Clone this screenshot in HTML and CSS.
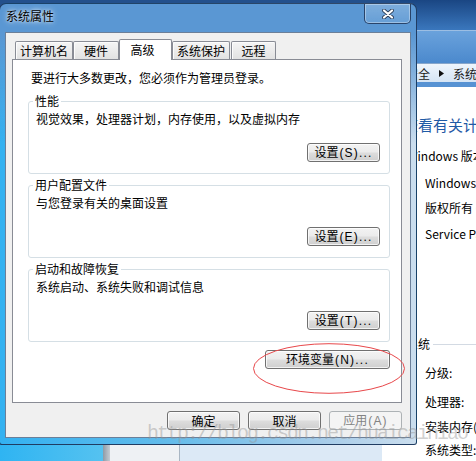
FILE: index.html
```html
<!DOCTYPE html>
<html lang="zh-CN">
<head>
<meta charset="utf-8">
<title>系统属性</title>
<link rel="stylesheet" href="styles.css">
</head>
<body>
<div class="desktop">
  <div class="backwin">
    <div class="bw-glass"></div>
    <div class="bw-edge"></div>
    <div class="bw-pane"></div>
    <div class="bw-blue"></div>
    <div class="bw-white"></div>
  </div>

  <div class="explorer">
    <div class="ex-title"></div>
    <div class="ex-nav"></div>
    <div class="ex-address">
      <span>安全</span>
      <svg class="ex-arrow" width="5" height="7" viewBox="0 0 5 7"><path d="M0 0 L5 3.5 L0 7 Z" fill="#111"/></svg>
      <span>系统</span>
    </div>
    <div class="ex-bar"></div>
    <div class="ex-content">
      <div class="ex-heading">查看有关计算机的基本信息</div>
      <div class="ex-sub">Windows 版本</div>
      <div class="ex-item i1">Windows 7 旗舰版</div>
      <div class="ex-item i2">版权所有 © 2009 Microsoft Corporation</div>
      <div class="ex-item i3">Service Pack 1</div>
      <div class="ex-section"><span>系统</span><span class="ex-rule"></span></div>
      <div class="ex-item i4">分级:</div>
      <div class="ex-item i5">处理器:</div>
      <div class="ex-item i6">安装内存(RAM):</div>
      <div class="ex-item i7">系统类型:</div>
    </div>
  </div>

  <div class="dialog">
    <div class="titlebar">
      <span class="title">系统属性</span>
      <span class="close">
        <svg width="12" height="10" viewBox="0 0 12 10">
          <path d="M2 1.5 L10 8.5 M10 1.5 L2 8.5" stroke="#2b3d57" stroke-width="3.8" stroke-linecap="round"/>
          <path d="M2 1.5 L10 8.5 M10 1.5 L2 8.5" stroke="#ffffff" stroke-width="2.2" stroke-linecap="round"/>
        </svg>
      </span>
    </div>
    <div class="client">
      <div class="tabctl">
        <div class="tabs">
          <div class="tab t1">计算机名</div>
          <div class="tab t2">硬件</div>
          <div class="tab t3 active">高级</div>
          <div class="tab t4">系统保护</div>
          <div class="tab t5">远程</div>
        </div>
        <div class="panel">
          <p class="intro">要进行大多数更改，您必须作为管理员登录。</p>
          <fieldset class="group">
            <legend>性能</legend>
            <div class="group-body">
              <p class="desc">视觉效果，处理器计划，内存使用，以及虚拟内存</p>
              <button class="btn">设置<span class="key">(S)...</span></button>
            </div>
          </fieldset>
          <fieldset class="group">
            <legend>用户配置文件</legend>
            <div class="group-body">
              <p class="desc">与您登录有关的桌面设置</p>
              <button class="btn">设置<span class="key">(E)...</span></button>
            </div>
          </fieldset>
          <fieldset class="group">
            <legend>启动和故障恢复</legend>
            <div class="group-body">
              <p class="desc">系统启动、系统失败和调试信息</p>
              <button class="btn">设置<span class="key">(T)...</span></button>
            </div>
          </fieldset>
          <div class="env-row">
            <button class="btn env">环境变量<span class="key">(N)...</span></button>
          </div>
        </div>
      </div>
      <div class="actions">
        <button class="btn act">确定</button>
        <button class="btn act">取消</button>
        <button class="btn act disabled">应用<span class="key">(A)</span></button>
      </div>
    </div>
  </div>

  <svg class="highlight" width="154" height="53" viewBox="0 0 154 53">
    <ellipse cx="77" cy="26.5" rx="75.5" ry="24.8" fill="none" stroke="#e8474a" stroke-width="1"/>
  </svg>

  <div class="watermark">http://blog.csdn.net/huaicainiao</div>
</div>
</body>
</html>
```

FILE: styles.css
```css
* { box-sizing: border-box; }
html, body { margin: 0; padding: 0; }
body {
  width: 476px;
  height: 461px;
  overflow: hidden;
  font-family: "Noto Sans CJK SC", "Noto Sans", sans-serif;
  font-size: 12px;
  color: #000;
}
p { margin: 0; }

.desktop {
  position: relative;
  width: 476px;
  height: 461px;
  overflow: hidden;
  background: #23508c;
}

/* window peeking out below the dialog */
.backwin {
  position: absolute;
  left: 0;
  top: 436px;
  width: 400px;
  height: 25px;
  display: flex;
}
.bw-glass { width: 103px; background: linear-gradient(to right, #2fb4f2, #55c2f0); }
.bw-edge { width: 7px; background: linear-gradient(to right, #8e9aa6, #c4ccd4); }
.bw-pane { width: 70px; background: #eef1f4; border-right: 1px solid #a9b6c3; }
.bw-blue { width: 202px; background: #dce9f6; }
.bw-white { width: 18px; background: #fff; }

/* explorer window behind */
.explorer {
  position: absolute;
  left: 400px;
  top: 0;
  width: 76px;
  height: 461px;
  background: #fff;
  overflow: hidden;
  display: flex;
  flex-direction: column;
}
.ex-title { height: 30px; flex: none; background: linear-gradient(#1a4683, #3a77bd); }
.ex-nav {
  height: 33px;
  flex: none;
  background: linear-gradient(#6aa2dc, #4b89cd);
  border-top: 1px solid rgba(255,255,255,0.45);
}
.ex-address {
  height: 19px;
  flex: none;
  display: flex;
  align-items: center;
  padding-left: 6px;
  white-space: nowrap;
  background: linear-gradient(#eef5fc, #d5e4f4);
  border-top: 1px solid #86a6cb;
  color: #1a1a1a;
  line-height: 17px;
}
.ex-arrow { margin: 0 9px 0 9px; flex: none; }
.ex-bar { height: 5px; flex: none; background: #5692d3; }
.ex-content { padding-top: 28px; white-space: nowrap; }
.ex-heading {
  font-size: 15px;
  line-height: 20px;
  color: #1f5aa6;
  margin-left: 3px;
}
.ex-sub { margin: 12px 0 0 7px; line-height: 18px; }
.ex-item { margin-left: 25px; line-height: 18px; }
.i1 { margin-top: 9px; }
.i2 { margin-top: 7px; }
.i3 { margin-top: 8px; }
.i4 { margin-top: 11px; }
.i5 { margin-top: 11px; }
.i6 { margin-top: 7px; }
.i7 { margin-top: 5px; }
.ex-section {
  margin: 92px 0 0 6px;
  line-height: 18px;
  display: flex;
  align-items: center;
}
.ex-rule { flex: 1; height: 1px; background: #d3dae3; margin-left: 3px; }

/* dialog */
.dialog {
  position: absolute;
  left: -1px;
  top: 3px;
  width: 418px;
  height: 442px;
  display: flex;
  flex-direction: column;
  padding: 0 5px 6px 5px;
  border: 1px solid rgba(18, 38, 70, 0.8);
  border-radius: 7px 7px 3px 3px;
  background:
    linear-gradient(to bottom, #5a97d3 0, #5a97d3 30px, rgba(90,151,211,0) 140px),
    linear-gradient(to right, #33b1f1 0%, #62bbea 40%, #a7cce9 78%, #cbdeee 100%);
}
.titlebar {
  height: 28px;
  flex: none;
  display: flex;
  align-items: flex-start;
  padding-left: 1px;
}
.title {
  margin-top: 5px;
  line-height: 14px;
  font-size: 12px;
  color: #000;
  text-shadow: 0 0 6px rgba(255,255,255,0.9), 0 0 3px rgba(255,255,255,0.7);
}
.close {
  margin-left: auto;
  width: 47px;
  height: 20px;
  display: flex;
  align-items: center;
  justify-content: center;
  border: 1px solid rgba(28, 50, 86, 0.85);
  border-top: none;
  border-radius: 0 0 5px 5px;
  background: linear-gradient(rgba(255,255,255,0.22), rgba(255,255,255,0.08));
  box-shadow: inset 0 0 0 1px rgba(255,255,255,0.35);
}

.client {
  width: 406px;
  height: 406px;
  flex: none;
  background: #f0f0f0;
  border: 1px solid #6b7f99;
  padding: 6px 8px 0 6px;
}
.tabctl { width: 390px; }
.tabs {
  height: 20px;
  display: flex;
  align-items: flex-end;
  padding-left: 3px;
  position: relative;
  z-index: 1;
}
.tab {
  height: 18px;
  border: 1px solid #898c95;
  border-bottom: none;
  border-radius: 2px 2px 0 0;
  background: linear-gradient(#f5f5f5, #e2e2e2);
  box-shadow: inset 1px 1px 0 #fcfcfc;
  line-height: 17px;
  text-align: center;
  white-space: nowrap;
}
.t1 { width: 58px; }
.t2 { width: 46px; }
.t3 { width: 53px; }
.t4 { width: 58px; }
.t5 { width: 45px; margin-left: 1px; }
.tab.active {
  height: 21px;
  margin-bottom: -1px;
  background: #fff;
  box-shadow: none;
  line-height: 19px;
  padding-right: 6px;
}
.panel {
  height: 344px;
  border: 1px solid #898c95;
  background: #fff;
  padding: 10px 11px 0 15px;
}
.intro { margin: 0 0 8px 3px; line-height: 16px; white-space: nowrap; }

.group {
  margin: 0 0 4px 0;
  padding: 3px 9px 11px 7px;
  border: 1px solid #d5dfe5;
  border-radius: 3px;
  min-width: 0;
}
.group legend {
  padding: 0 2px;
  margin-left: -3px;
  line-height: 14px;
  font-size: 12px;
}
.group-body { display: flex; flex-direction: column; }
.desc { line-height: 15px; white-space: nowrap; }
.group .btn { align-self: flex-end; margin-top: 17px; }

.btn {
  width: 73px;
  height: 19px;
  padding: 0;
  border: 1px solid #707070;
  border-radius: 3px;
  background: linear-gradient(#f3f3f3 0%, #ebebeb 48%, #dddddd 52%, #cfcfcf 100%);
  box-shadow: inset 0 0 0 1px rgba(255,255,255,0.75);
  font-family: "Noto Sans CJK SC", "Noto Sans", sans-serif;
  font-size: 12px;
  line-height: 16px;
  color: #000;
  text-align: center;
  white-space: nowrap;
}
.key {
  font-family: "Liberation Sans", sans-serif;
  font-size: 12px;
  letter-spacing: 1.2px;
  margin-left: 1px;
}
.env-row { display: flex; justify-content: flex-end; margin-top: 8px; }
.btn.env { width: 125px; }

.actions {
  display: flex;
  justify-content: flex-end;
  gap: 8px;
  margin-top: 8px;
}
.btn.act { width: 73px; }
.btn.disabled {
  border-color: #adb2b5;
  background: #f4f4f4;
  box-shadow: none;
  color: #838383;
}

/* overlays */
.highlight {
  position: absolute;
  left: 252px;
  top: 342px;
}
.watermark {
  position: absolute;
  left: 147px;
  top: 423px;
  font-family: "Liberation Mono", monospace;
  font-size: 20px;
  letter-spacing: -2px;
  line-height: 22px;
  color: rgba(150, 150, 150, 0.45);
  white-space: nowrap;
  pointer-events: none;
}
```
